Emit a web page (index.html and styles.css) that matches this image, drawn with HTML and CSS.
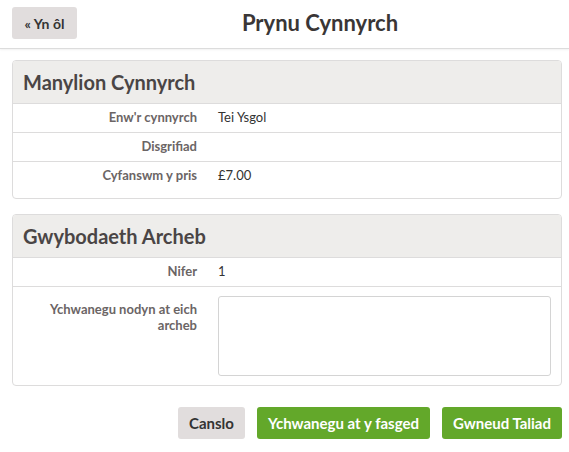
FILE: index.html
```html
<!DOCTYPE html>
<html lang="cy">
<head>
<meta charset="utf-8">
<title>Prynu Cynnyrch</title>
<link rel="stylesheet" href="styles.css">
</head>
<body>
<header class="topbar">
  <a class="back-btn" href="#">« Yn ôl</a>
  <h1 class="page-title">Prynu Cynnyrch</h1>
</header>
<main class="content">
  <section class="card">
    <h2 class="card-head">Manylion Cynnyrch</h2>
    <div class="row">
      <div class="label">Enw'r cynnyrch</div>
      <div class="value">Tei Ysgol</div>
    </div>
    <div class="row">
      <div class="label">Disgrifiad</div>
      <div class="value"></div>
    </div>
    <div class="row row-last">
      <div class="label">Cyfanswm y pris</div>
      <div class="value">£7.00</div>
    </div>
  </section>
  <section class="card card-second">
    <h2 class="card-head">Gwybodaeth Archeb</h2>
    <div class="row">
      <div class="label">Nifer</div>
      <div class="value">1</div>
    </div>
    <div class="row row-note">
      <label class="label label-note" for="note">Ychwanegu nodyn at eich archeb</label>
      <div class="value"><textarea id="note" class="note"></textarea></div>
    </div>
  </section>
  <div class="actions">
    <button class="btn btn-grey" type="button">Canslo</button>
    <button class="btn btn-green" type="button">Ychwanegu at y fasged</button>
    <button class="btn btn-green" type="button">Gwneud Taliad</button>
  </div>
</main>
</body>
</html>
```
FILE: styles.css
```css
* { box-sizing: border-box; }
body {
  margin: 0;
  font-family: Lato, "Open Sans", sans-serif;
  color: #333;
  background: #fff;
}
.topbar {
  height: 49px;
  display: flex;
  align-items: center;
  padding: 0 6px 0 12px;
  border-bottom: 1px solid #dcdcdc;
  box-shadow: 0 1px 2px rgba(0,0,0,0.06);
}
.back-btn {
  display: flex;
  align-items: center;
  height: 32px;
  width: 65px;
  justify-content: center;
  background: #e1dddd;
  border-radius: 3px;
  color: #333;
  font-size: 14px;
  font-weight: 700;
  text-decoration: none;
  margin-top: -2px;
}
.page-title {
  flex: 1;
  margin: 0;
  text-align: center;
  font-size: 22px;
  font-weight: 700;
  color: #3a3636;
  margin-top: -4px;
}
.content {
  padding: 11px 7px 0 12px;
}
.card {
  border: 1px solid #dddcdc;
  border-radius: 4px;
  overflow: hidden;
}
.card-second { margin-top: 15px; }
.card-head {
  margin: 0;
  height: 42px;
  display: flex;
  align-items: center;
  padding: 0 10px;
  background: #eeedeb;
  font-size: 20px;
  font-weight: 700;
  color: #4a4545;
}
.row {
  display: grid;
  grid-template-columns: 184px 1fr;
  column-gap: 21px;
  align-items: center;
  border-top: 1px solid #dddcdc;
  height: 29px;
  font-size: 13px;
  padding-bottom: 2px;
}
.row-last {
  height: 37px;
  align-items: start;
  padding-top: 5px;
  padding-bottom: 0;
}
.label {
  text-align: right;
  font-weight: 700;
  color: #6b6565;
}
.value { color: #333; }
.row-note {
  height: 99px;
  align-items: start;
  padding-top: 9px;
  padding-bottom: 0;
}
.label-note {
  line-height: 16px;
  padding-top: 5px;
  padding-left: 10px;
}
.note {
  display: block;
  width: 333px;
  height: 80px;
  border: 1px solid #d4d4d4;
  border-radius: 3px;
  resize: none;
  font: inherit;
}
.actions {
  display: flex;
  justify-content: flex-end;
  gap: 12px;
  margin-top: 21px;
}
.btn {
  height: 32px;
  border: 0;
  border-radius: 3px;
  padding: 0 11px;
  font-family: inherit;
  font-size: 15px;
  font-weight: 700;
}
.btn-grey { background: #e1dddd; color: #333; }
.btn-green { background: #63a82a; color: #fff; }
```
